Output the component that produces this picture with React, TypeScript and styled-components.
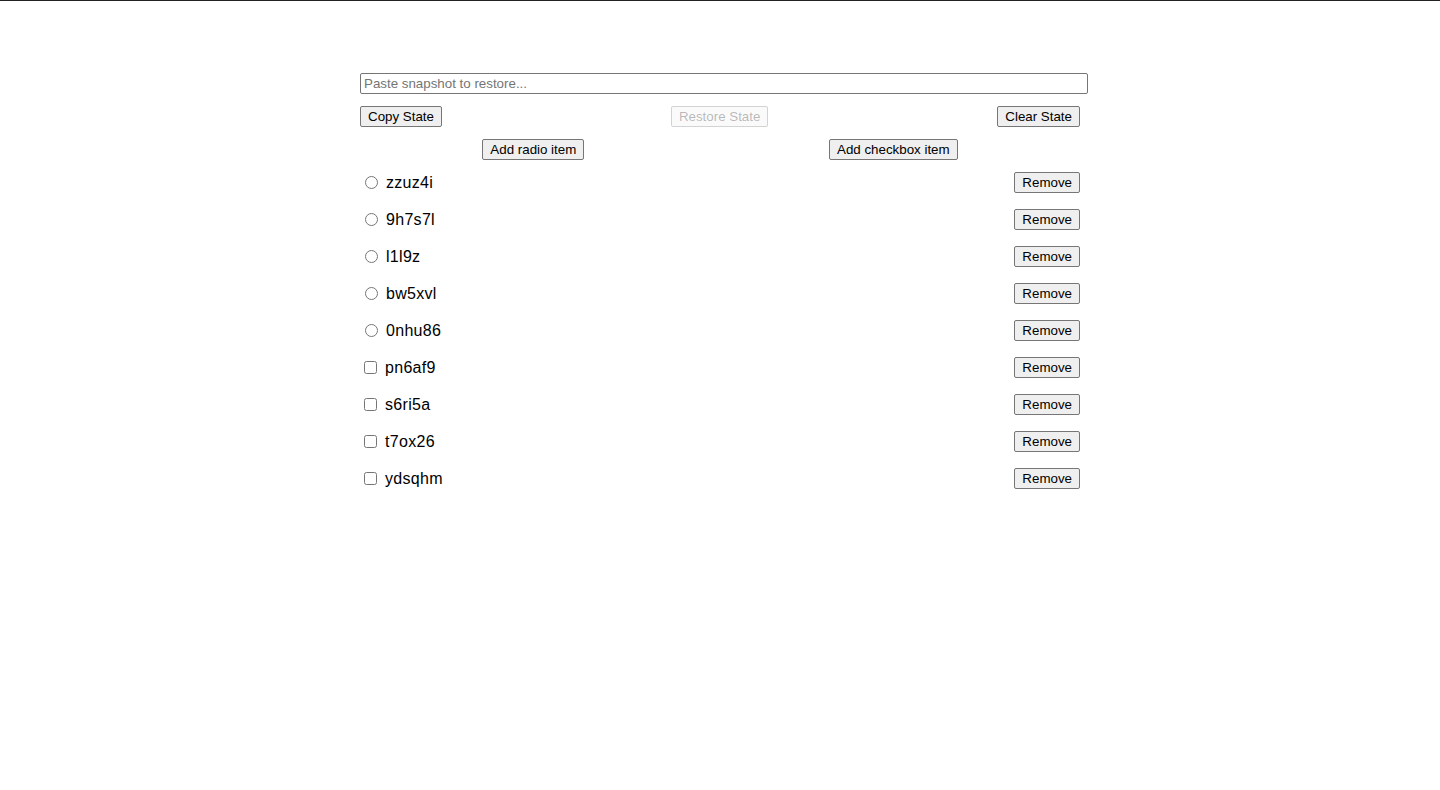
import React, { useState } from "react";
import styled, { createGlobalStyle } from "styled-components";

const GlobalStyle = createGlobalStyle`
  html, body { margin: 0; padding: 0; background: #fff; }
  body { font-family: "Liberation Sans", Arial, sans-serif; color: #000; }
`;

const TopRule = styled.div`
  height: 1px;
  background: #222;
`;

const Container = styled.main`
  width: 720px;
  margin: 72px auto 0;
  display: flex;
  flex-direction: column;
  gap: 12px;
`;

const SnapshotInput = styled.input`
  width: 100%;
  box-sizing: content-box;
  font: 13.333px "Liberation Sans", Arial, sans-serif;
  padding: 1px 3px;
  border: 1px solid #767676;
  border-radius: 2px;
  height: 17px;
  margin: 0;
  &::placeholder { color: #757575; }
`;

const Bar = styled.div<{ $justify: string }>`
  display: flex;
  justify-content: ${(p) => p.$justify};
  align-items: center;
`;

const Button = styled.button`
  font: 13.333px "Liberation Sans", Arial, sans-serif;
  padding: 1px 7px;
  height: 21px;
  margin: 0;
  border: 1px solid #767676;
  border-radius: 2px;
  background: #efefef;
  color: #000;
  &:disabled {
    color: rgba(16, 16, 16, 0.3);
    background: rgba(239, 239, 239, 0.3);
    border-color: rgba(118, 118, 118, 0.3);
  }
`;

const List = styled.ul`
  list-style: none;
  margin: 0;
  padding: 0;
  display: flex;
  flex-direction: column;
  gap: 16px;
`;

const Row = styled.li`
  display: flex;
  justify-content: space-between;
  align-items: center;
  height: 21px;
`;

const ItemLabel = styled.label`
  display: flex;
  align-items: center;
  font-size: 16px;
`;

const Choice = styled.input<{ $kind: string }>`
  width: 13px;
  height: 13px;
  margin: ${(p) => (p.$kind === "radio" ? "0 3px 0 5px" : "0 3px 0 4px")};
`;

const LabelText = styled.span`
  margin-left: 5px;
  letter-spacing: 0.3px;
`;

const initial = [
  { id: "zzuz4i", kind: "radio" },
  { id: "9h7s7l", kind: "radio" },
  { id: "l1l9z", kind: "radio" },
  { id: "bw5xvl", kind: "radio" },
  { id: "0nhu86", kind: "radio" },
  { id: "pn6af9", kind: "checkbox" },
  { id: "s6ri5a", kind: "checkbox" },
  { id: "t7ox26", kind: "checkbox" },
  { id: "ydsqhm", kind: "checkbox" },
];

export default function App() {
  const [items, setItems] = useState(initial);
  const [snap, setSnap] = useState("");
  return (
    <>
      <GlobalStyle />
      <TopRule />
      <Container>
        <SnapshotInput
          placeholder="Paste snapshot to restore..."
          value={snap}
          onChange={(e) => setSnap(e.target.value)}
        />
        <Bar $justify="space-between">
          <Button>Copy State</Button>
          <Button disabled={!snap}>Restore State</Button>
          <Button onClick={() => setItems([])}>Clear State</Button>
        </Bar>
        <Bar $justify="space-around">
          <Button>Add radio item</Button>
          <Button>Add checkbox item</Button>
        </Bar>
        <List>
          {items.map((it) => (
            <Row key={it.id}>
              <ItemLabel>
                <Choice $kind={it.kind} type={it.kind} name={it.kind === "radio" ? "group" : undefined} />
                <LabelText>{it.id}</LabelText>
              </ItemLabel>
              <Button onClick={() => setItems(items.filter((x) => x.id !== it.id))}>Remove</Button>
            </Row>
          ))}
        </List>
      </Container>
    </>
  );
}
